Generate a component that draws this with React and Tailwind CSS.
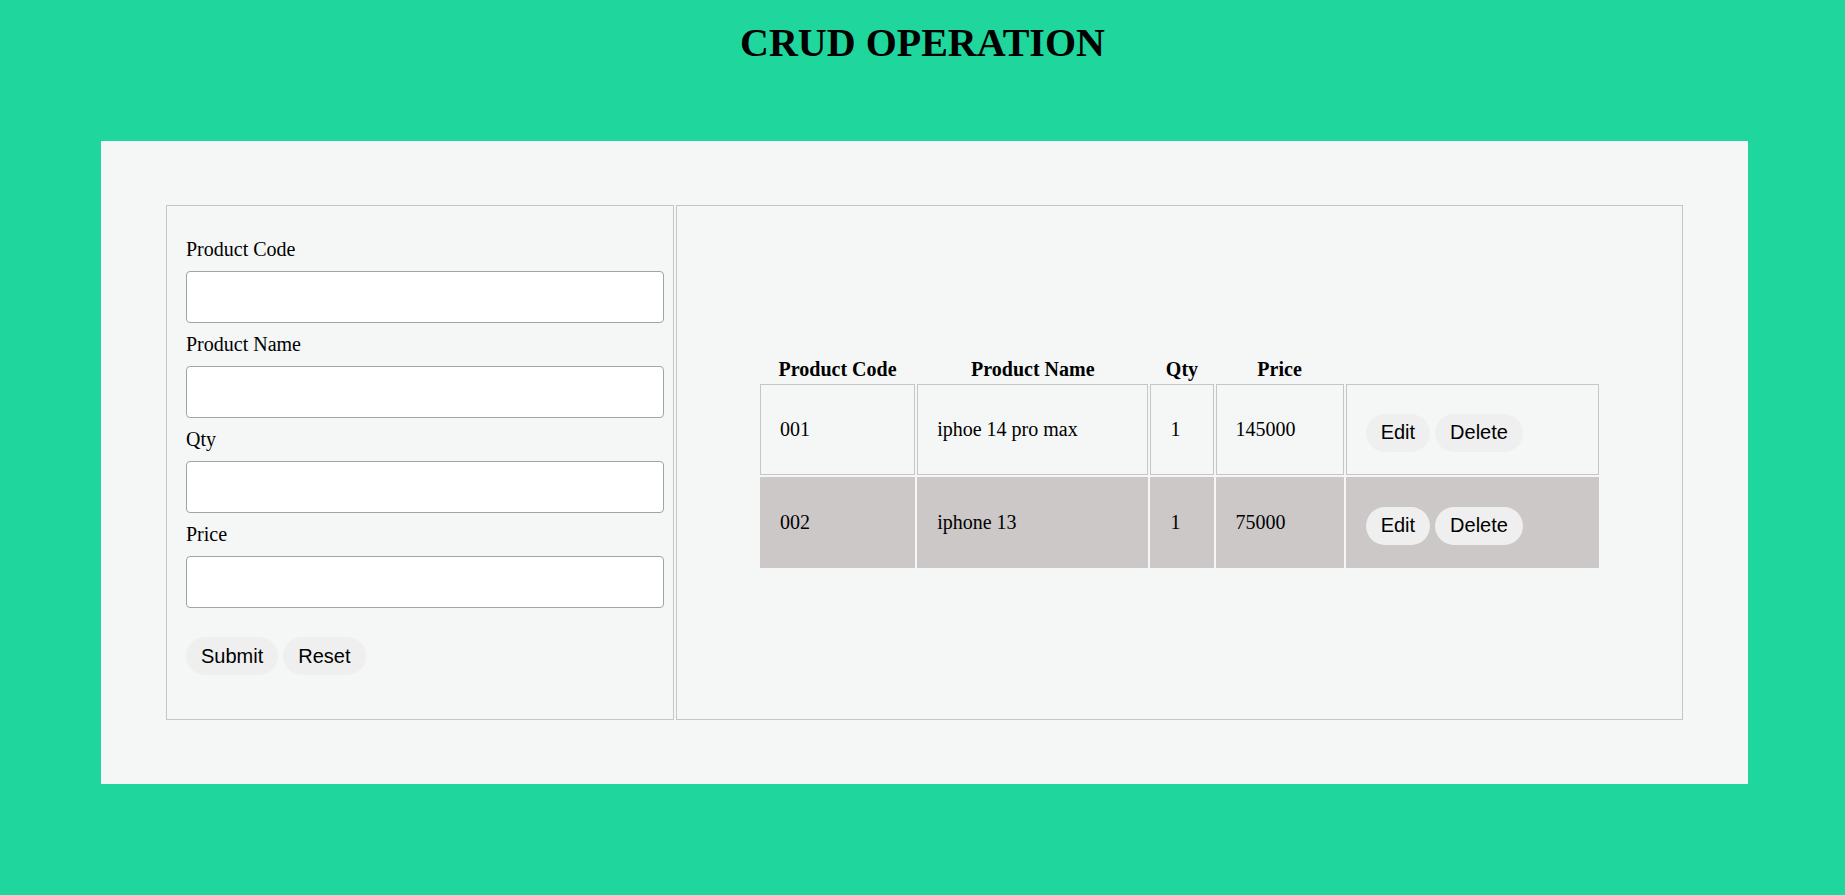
import React from "react";

const serif = { fontFamily: '"Liberation Serif", "Times New Roman", serif' };

function Btn({ children }) {
  return (
    <button
      type="button"
      className="h-[38px] rounded-full bg-[#efefef] px-[15px] text-[20px] leading-[23px] text-black"
      style={{ fontFamily: '"Liberation Sans", Arial, sans-serif' }}
    >
      {children}
    </button>
  );
}

function Field({ label }) {
  return (
    <div className="flex flex-col">
      <label className="text-[20px] leading-[23px] text-black">{label}</label>
      <input
        type="text"
        className="mt-[10px] mb-[10px] h-[52px] w-[478px] rounded-[4px] border border-[#a3a3a3] bg-white"
      />
    </div>
  );
}

const rows = [
  { code: "001", name: "iphoe 14 pro max", qty: "1", price: "145000", alt: false },
  { code: "002", name: "iphone 13", qty: "1", price: "75000", alt: true },
];

export default function App() {
  return (
    <div className="min-h-[895px] w-full bg-[#1fd69c] pt-[21px]" style={serif}>
      <h1 className="m-0 text-center text-[40px] font-bold leading-[44px] text-black">
        CRUD OPERATION
      </h1>
      <div className="ml-[101px] mt-[76px] flex h-[643px] w-[1647px] gap-[2px] bg-[#f5f7f6] px-[65px] py-[64px]">
        <div className="h-[515px] w-[508px] border border-[#c6c6c6] pl-[19px] pt-[32px]">
          <Field label="Product Code" />
          <Field label="Product Name" />
          <Field label="Qty" />
          <Field label="Price" />
          <div className="mt-[19px] flex gap-[5px]">
            <Btn>Submit</Btn>
            <Btn>Reset</Btn>
          </div>
        </div>
        <div className="flex h-[515px] flex-1 items-center justify-center border border-[#c6c6c6]">
          <table className="w-[843px] table-fixed border-separate border-spacing-[2.4px] text-[20px] leading-[23px] text-black">
            <colgroup>
              <col className="w-[155px]" />
              <col className="w-[231px]" />
              <col className="w-[63px]" />
              <col className="w-[128px]" />
              <col className="w-[253px]" />
            </colgroup>
            <thead>
              <tr>
                <th className="h-[25px] p-[1px] text-center font-bold">Product Code</th>
                <th className="h-[25px] p-[1px] text-center font-bold">Product Name</th>
                <th className="h-[25px] p-[1px] text-center font-bold">Qty</th>
                <th className="h-[25px] p-[1px] text-center font-bold">Price</th>
                <th className="h-[25px] p-[1px]"></th>
              </tr>
            </thead>
            <tbody>
              {rows.map((r) => {
                const cell = r.alt
                  ? "h-[91px] border border-[#ccc8c7] bg-[#ccc8c7] pl-[19px] align-middle font-normal"
                  : "h-[91px] border border-[#c6c6c6] pl-[19px] align-middle font-normal";
                return (
                  <tr key={r.code}>
                    <td className={cell}>{r.code}</td>
                    <td className={cell}>{r.name}</td>
                    <td className={cell}>{r.qty}</td>
                    <td className={cell}>{r.price}</td>
                    <td className={cell}>
                      <div className="flex gap-[5px] pt-[6px]">
                        <Btn>Edit</Btn>
                        <Btn>Delete</Btn>
                      </div>
                    </td>
                  </tr>
                );
              })}
            </tbody>
          </table>
        </div>
      </div>
    </div>
  );
}
